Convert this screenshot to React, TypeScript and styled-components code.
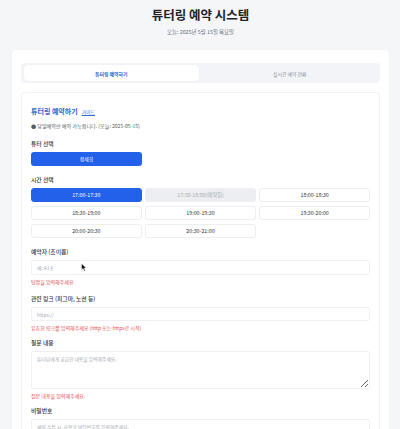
import React from "react";
import styled, { createGlobalStyle } from "styled-components";

const Global = createGlobalStyle`
  html, body { margin: 0; padding: 0; }
  body {
    background: #f5f6f8;
    font-family: "Noto Sans CJK KR", "Noto Sans", "Liberation Sans", sans-serif;
    color: #222;
    overflow: hidden;
  }
  * { box-sizing: border-box; }
`;

const Page = styled.div`
  padding: 0 11px 0 12px;
  position: relative;
`;

const Header = styled.header`
  padding-top: 7px;
  text-align: center;
`;

const Title = styled.h1`
  margin: 0;
  font-size: 12.5px;
  line-height: 16px;
  font-weight: 700;
  color: #1f2328;
`;

const Subtitle = styled.p`
  margin: 5px 0 0;
  font-size: 5.4px;
  line-height: 8px;
  color: #6b7280;
`;

const Card = styled.main`
  margin-top: 14px;
  background: #ffffff;
  border-radius: 4px;
  box-shadow: 0 0 2px rgba(0, 0, 0, 0.05);
  padding: 13px 9px 0;
`;

const Tabs = styled.div`
  display: grid;
  grid-template-columns: 1fr 1fr;
  gap: 4px;
  padding: 2px 3px;
  background: #f2f4f7;
  border-radius: 4px;
  height: 20px;
`;

const Tab = styled.div<{ $active?: boolean }>`
  display: flex;
  align-items: center;
  justify-content: center;
  border-radius: 4px;
  font-size: 4.9px;
  font-weight: ${(p) => (p.$active ? 600 : 400)};
  background: ${(p) => (p.$active ? "#ffffff" : "transparent")};
  color: ${(p) => (p.$active ? "#2f5fd0" : "#8a9099")};
  box-shadow: ${(p) => (p.$active ? "0 0 1px rgba(0,0,0,0.08)" : "none")};
`;

const FormCard = styled.section`
  margin-top: 9px;
  border: 1px solid #f1f2f5;
  border-bottom: none;
  border-radius: 4px 4px 0 0;
  padding: 13px 9px 20px 9px;
`;

const FormTitleRow = styled.div`
  display: flex;
  align-items: baseline;
  gap: 4px;
`;

const FormTitle = styled.h2`
  margin: 0;
  font-size: 7px;
  line-height: 10px;
  font-weight: 700;
  color: #2f5fd0;
`;

const GuideLink = styled.a`
  font-size: 4.8px;
  color: #2f6fe0;
  text-decoration: underline;
`;

const Notice = styled.p`
  margin: 6px 0 0;
  font-size: 5.1px;
  line-height: 8px;
  color: #555b63;
`;

const Field = styled.div<{ $gap?: number }>`
  margin-top: ${(p) => p.$gap ?? 10}px;
  display: flex;
  flex-direction: column;
`;

const Label = styled.label`
  font-size: 5.8px;
  line-height: 8px;
  font-weight: 500;
  color: #30343a;
  margin-bottom: 4px;
`;

const TutorButton = styled.button`
  width: 111px;
  height: 13.5px;
  border: none;
  border-radius: 3px;
  background: #2461eb;
  color: #fff;
  font-family: inherit;
  font-size: 4.8px;
  padding: 0;
`;

const SlotGrid = styled.div`
  display: grid;
  grid-template-columns: repeat(3, 1fr);
  gap: 4px 3.5px;
`;

const Slot = styled.button<{ $state?: "selected" | "disabled" | "normal" }>`
  height: 14px;
  border-radius: 3px;
  font-family: inherit;
  font-size: 5.3px;
  padding: 0;
  border: 1px solid
    ${(p) => (p.$state === "selected" ? "#2461eb" : "#eceef1")};
  background: ${(p) =>
    p.$state === "selected" ? "#2461eb" : p.$state === "disabled" ? "#eceef1" : "#ffffff"};
  color: ${(p) =>
    p.$state === "selected" ? "#ffffff" : p.$state === "disabled" ? "#a9aeb6" : "#33373d"};
`;

const Input = styled.input<{ $h?: number }>`
  height: ${(p) => p.$h ?? 15}px;
  width: 100%;
  border: 1px solid #eef0f3;
  border-radius: 2px;
  padding: 0 5px;
  font-family: inherit;
  font-size: 4.8px;
  background: #fff;
  outline: none;
  &::placeholder { color: #a4a9b1; }
`;

const TextArea = styled.textarea`
  height: 38.5px;
  width: 100%;
  border: 1px solid #eef0f3;
  border-radius: 2px;
  padding: 3px 5px;
  font-family: inherit;
  font-size: 4.8px;
  line-height: 7px;
  resize: vertical;
  outline: none;
  display: block;
  &::placeholder { color: #a4a9b1; }
`;

const ErrorText = styled.p`
  margin: 2.5px 0 0;
  font-size: 5px;
  line-height: 7px;
  color: #e5484d;
`;

const Cursor = styled.svg`
  position: absolute;
  left: 81px;
  top: 263px;
  width: 6px;
  height: 9px;
  pointer-events: none;
`;

const slots: { t: string; s: "selected" | "disabled" | "normal" }[] = [
  { t: "17:00-17:30", s: "selected" },
  { t: "17:30-18:00(예약됨)", s: "disabled" },
  { t: "18:00-18:30", s: "normal" },
  { t: "18:30-19:00", s: "normal" },
  { t: "19:00-19:30", s: "normal" },
  { t: "19:30-20:00", s: "normal" },
  { t: "20:00-20:30", s: "normal" },
  { t: "20:30-21:00", s: "normal" },
];

export default function App() {
  return (
    <Page>
      <Global />
      <Header>
        <Title>튜터링 예약 시스템</Title>
        <Subtitle>오늘: 2025년 5월 15일 목요일</Subtitle>
      </Header>
      <Card>
        <Tabs>
          <Tab $active>튜터링 예약하기</Tab>
          <Tab>실시간 예약 현황</Tab>
        </Tabs>
        <FormCard>
          <FormTitleRow>
            <FormTitle>튜터링 예약하기</FormTitle>
            <GuideLink href="#">가이드</GuideLink>
          </FormTitleRow>
          <Notice>● 당일예약만 예약 가능합니다. (오늘: 2025-05-15)</Notice>

          <Field $gap={10}>
            <Label>튜터 선택</Label>
            <TutorButton>장세희</TutorButton>
          </Field>

          <Field $gap={10.5}>
            <Label>시간 선택</Label>
            <SlotGrid>
              {slots.map((s) => (
                <Slot key={s.t} $state={s.s}>
                  {s.t}
                </Slot>
              ))}
            </SlotGrid>
          </Field>

          <Field $gap={10}>
            <Label>예약자 (조이름)</Label>
            <Input placeholder="예: A1조" />
            <ErrorText>팀명을 입력해주세요</ErrorText>
          </Field>

          <Field $gap={10.5}>
            <Label>관련 링크 (피그마, 노션 등)</Label>
            <Input $h={14} placeholder="https://" />
            <ErrorText>유효한 링크를 입력해주세요 (http 또는 https로 시작)</ErrorText>
          </Field>

          <Field $gap={8}>
            <Label>질문 내용</Label>
            <TextArea placeholder="튜터님에게 궁금한 내용을 입력해주세요." />
            <ErrorText>질문 내용을 입력해주세요.</ErrorText>
          </Field>

          <Field $gap={8.5}>
            <Label>비밀번호</Label>
            <Input placeholder="예약 수정 시, 사용할 비밀번호를 입력해주세요." />
          </Field>
        </FormCard>
      </Card>
      <Cursor viewBox="0 0 12 18">
        <path
          d="M1 1 L1 14 L4.2 11 L6.6 16.6 L8.6 15.7 L6.3 10.2 L10.6 10.2 Z"
          fill="#111"
          stroke="#fff"
          strokeWidth="1"
          strokeLinejoin="round"
        />
      </Cursor>
    </Page>
  );
}
